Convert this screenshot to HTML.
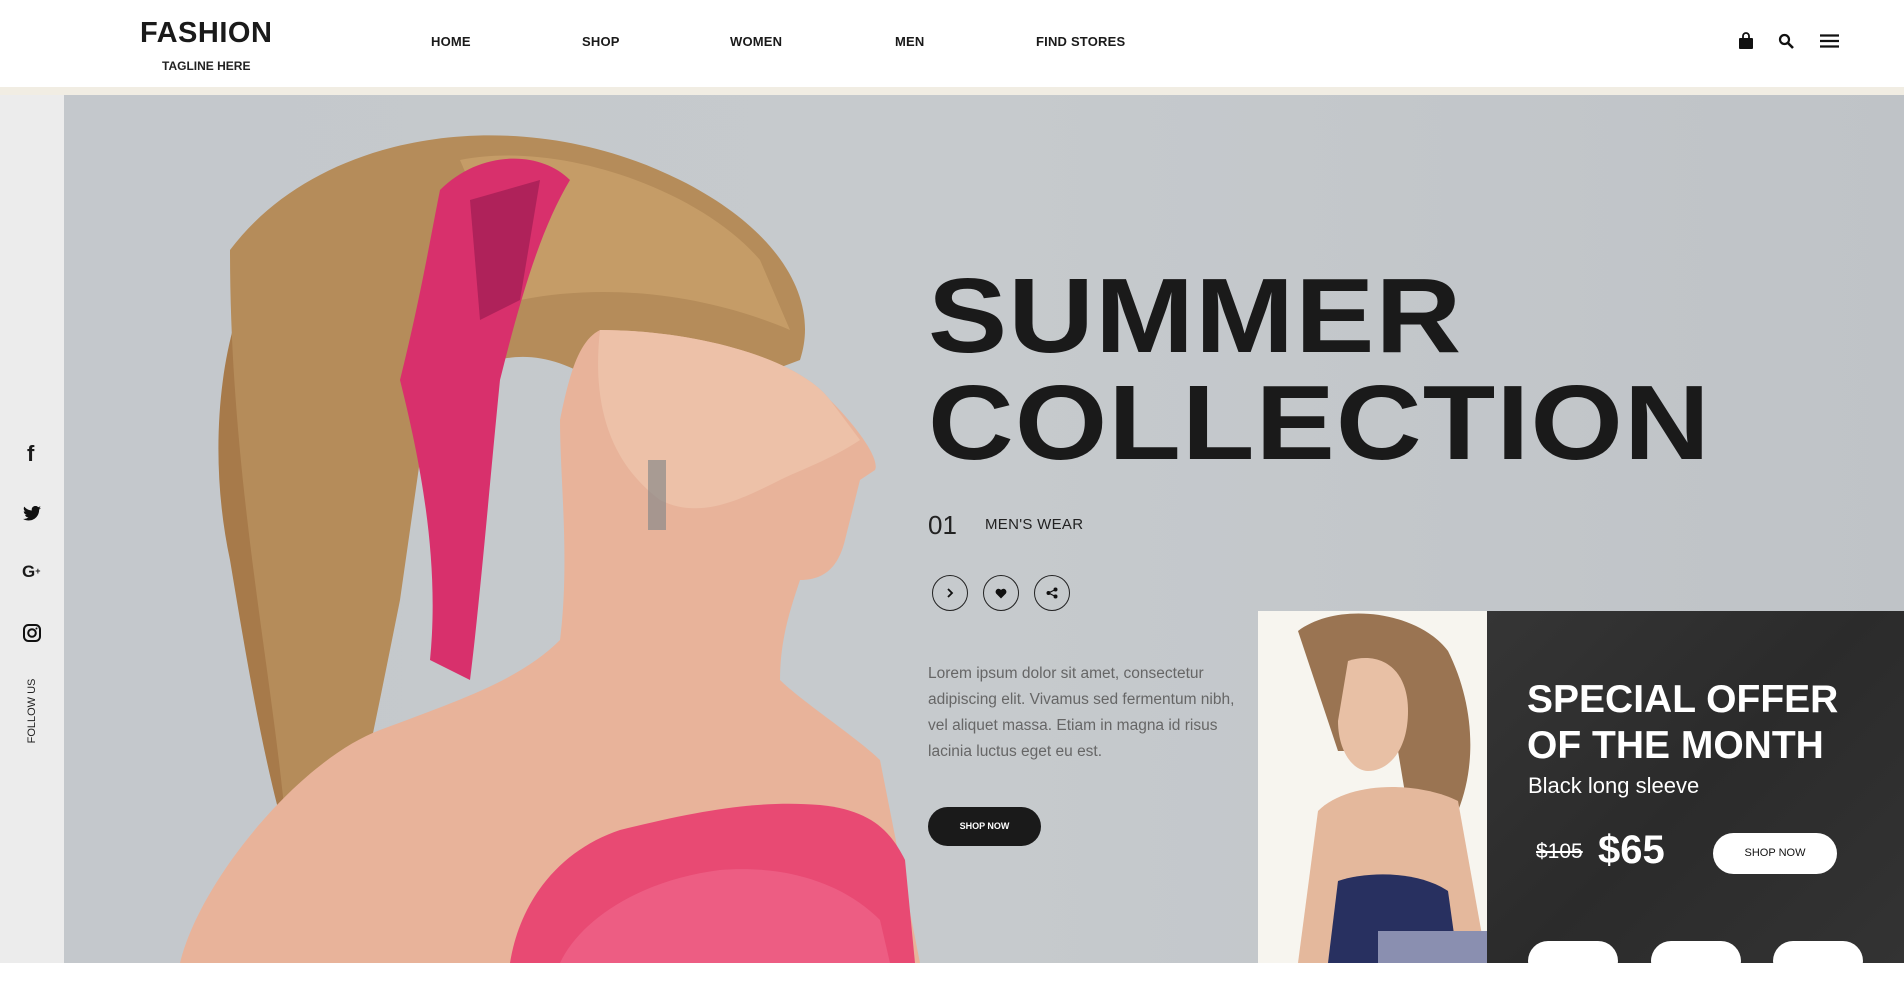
<!DOCTYPE html>
<html><head><meta charset="utf-8"><style>
*{margin:0;padding:0;box-sizing:border-box}
body{width:1904px;height:963px;overflow:hidden;font-family:"Liberation Sans",sans-serif;background:#fff;position:relative;color:#1a1a1a}
.abs{position:absolute}
header{position:absolute;left:0;top:0;width:1904px;height:87px;background:#fff}
.strip{position:absolute;left:0;top:87px;width:1904px;height:8px;background:#f1ede3}
.side{position:absolute;left:0;top:95px;width:64px;height:868px;background:#ececec}
.hero{position:absolute;left:64px;top:95px;width:1840px;height:868px;background:linear-gradient(90deg,#c4c8cc,#c6cacd 50%,#bfc3c7)}
.nav{position:absolute;top:34px;font-size:13px;font-weight:bold;letter-spacing:.2px}
.circ{position:absolute;width:36px;height:36px;border:1.5px solid #222;border-radius:50%;top:575px;display:flex;align-items:center;justify-content:center}
.wb{position:absolute;top:941px;width:90px;height:40px;background:#fff;border-radius:20px}
</style></head><body>
<header>
<div class="abs" style="left:140px;top:17px;font-size:29px;font-weight:bold;letter-spacing:.5px">FASHION</div>
<div class="abs" style="left:162px;top:59px;font-size:12px;font-weight:bold;color:#222">TAGLINE HERE</div>
<div class="nav" style="left:431px">HOME</div>
<div class="nav" style="left:582px">SHOP</div>
<div class="nav" style="left:730px">WOMEN</div>
<div class="nav" style="left:895px">MEN</div>
<div class="nav" style="left:1036px">FIND STORES</div>
<svg class="abs" style="left:1738px;top:32px" width="16" height="18" viewBox="0 0 16 18"><path d="M5 6V4a3 3 0 0 1 6 0v2" stroke="#111" stroke-width="1.8" fill="none"/><rect x="1" y="6" width="14" height="11" rx="1" fill="#111"/></svg>
<svg class="abs" style="left:1778px;top:33px" width="16" height="16" viewBox="0 0 16 16"><circle cx="6.5" cy="6.5" r="4.5" stroke="#111" stroke-width="2.2" fill="none"/><path d="M10 10l5 5" stroke="#111" stroke-width="2.6"/></svg>
<svg class="abs" style="left:1820px;top:34px" width="19" height="14" viewBox="0 0 19 14"><path d="M0 1.5h19M0 7h19M0 12.5h19" stroke="#111" stroke-width="2.2"/></svg>
</header>
<div class="strip"></div>
<div class="side">
<div class="abs" style="left:27px;top:346px;font-size:22px;font-weight:bold">f</div>
<svg class="abs" style="left:23px;top:411px" width="18" height="15" viewBox="0 0 24 20"><path d="M24 2.4a10 10 0 0 1-2.8.8A5 5 0 0 0 23.3.4a10 10 0 0 1-3.1 1.2A4.9 4.9 0 0 0 11.8 6 14 14 0 0 1 1.700.9a4.9 4.9 0 0 0 1.5 6.6A4.9 4.9 0 0 1 1 6.9a4.9 4.9 0 0 0 3.9 4.8 5 5 0 0 1-2.2.1 4.9 4.9 0 0 0 4.6 3.4A9.9 9.9 0 0 1 0 17.2 14 14 0 0 0 7.5 19.4c9.1 0 14-7.5 14-14v-.6A10 10 0 0 0 24 2.4z" fill="#111"/></svg>
<div class="abs" style="left:22px;top:467px;font-size:17px;font-weight:bold">G<span style="font-size:9px;vertical-align:3px">+</span></div>
<svg class="abs" style="left:23px;top:529px" width="18" height="18" viewBox="0 0 18 18"><rect x="1" y="1" width="16" height="16" rx="4.5" stroke="#111" stroke-width="2" fill="none"/><circle cx="9" cy="9" r="3.8" stroke="#111" stroke-width="2" fill="none"/><circle cx="13.5" cy="4.5" r="1" fill="#111"/></svg>
<div class="abs" style="left:-3px;top:610px;width:70px;font-size:11px;transform:rotate(-90deg);text-align:center;color:#222">FOLLOW US</div>
</div>
<div class="hero"></div>
<svg class="abs" style="left:64px;top:95px" width="1840" height="868" viewBox="64 95 1840 868">
<path d="M300 220 C230 260 200 420 230 560 C250 680 270 800 300 880 L360 880 C330 760 320 640 340 540 Z" fill="#a77a4a"/>
<path d="M230 250 C320 130 520 100 680 180 C780 230 820 300 800 360 L640 420 C560 330 450 330 420 460 L400 600 C380 700 360 800 340 880 L290 880 C280 700 230 500 230 250Z" fill="#b58c5a"/>
<path d="M460 160 C560 140 700 190 760 260 L790 330 C720 300 620 280 520 300Z" fill="#c9a06a" opacity=".8"/>
<path d="M440 190 C480 150 540 150 570 180 C540 230 520 300 500 380 C490 480 480 600 470 680 L430 660 C440 560 420 460 400 380 C420 300 430 240 440 190Z" fill="#d8306c"/>
<path d="M470 200 L540 180 L520 300 L480 320Z" fill="#9e1d52" opacity=".7"/>
<path d="M600 330 C700 330 800 360 830 400 C860 430 880 460 875 470 L860 480 C855 500 850 520 845 540 C840 560 830 580 800 580 C790 610 780 640 780 680 C800 700 860 740 880 760 L920 963 L180 963 C200 880 300 760 380 730 C460 700 520 680 560 640 C570 560 560 480 560 420 C570 370 580 340 600 330Z" fill="#e8b39a"/>
<path d="M600 330 C700 330 800 360 830 400 L860 440 C830 460 800 470 780 480 C740 500 700 520 660 500 C620 470 590 420 600 330Z" fill="#edc1a8"/>
<path d="M510 963 C520 900 560 850 620 830 C700 810 760 800 820 805 C870 810 890 830 905 860 L915 963Z" fill="#e84a73"/>
<path d="M560 963 C580 920 640 880 720 870 C780 865 840 880 880 920 L890 963Z" fill="#f0658a" opacity=".7"/>
<rect x="648" y="460" width="18" height="70" fill="#8a8a8a" opacity=".7"/>
</svg>
<div class="abs" style="left:928px;top:263px;font-size:106px;font-weight:bold;line-height:107px;color:#1a1a1a;letter-spacing:1px;transform:scaleX(1.12);transform-origin:left;white-space:nowrap">SUMMER<br>COLLECTION</div>
<div class="abs" style="left:928px;top:510px;font-size:26px;color:#222">01</div>
<div class="abs" style="left:985px;top:516px;font-size:15px;color:#222;letter-spacing:.3px">MEN'S WEAR</div>
<div class="circ" style="left:932px"><svg width="10" height="12" viewBox="0 0 10 12"><path d="M3 2l4 4-4 4" stroke="#111" stroke-width="1.8" fill="none"/></svg></div>
<div class="circ" style="left:983px"><svg width="12" height="11" viewBox="0 0 12 11"><path d="M6 10.5L1.2 5.6A2.7 2.7 0 0 1 6 2a2.7 2.7 0 0 1 4.8 3.6Z" fill="#111"/></svg></div>
<div class="circ" style="left:1034px"><svg width="12" height="12" viewBox="0 0 12 12"><circle cx="9.5" cy="2.5" r="2" fill="#111"/><circle cx="2.5" cy="6" r="2" fill="#111"/><circle cx="9.5" cy="9.5" r="2" fill="#111"/><path d="M9.5 2.5L2.5 6l7 3.5" stroke="#111" stroke-width="1.2" fill="none"/></svg></div>
<div class="abs" style="left:928px;top:661px;width:330px;font-size:15.5px;line-height:26px;color:#666">Lorem ipsum dolor sit amet, consectetur adipiscing elit. Vivamus sed fermentum nibh, vel aliquet massa. Etiam in magna id risus lacinia luctus eget eu est.</div>
<div class="abs" style="left:928px;top:807px;width:113px;height:39px;background:#1a1a1a;border-radius:20px;color:#fff;font-size:9px;font-weight:bold;text-align:center;line-height:39px">SHOP NOW</div>
<div class="abs" style="left:1258px;top:611px;width:229px;height:352px;background:#f7f5ef;overflow:hidden">
<svg width="229" height="352" viewBox="0 0 229 352"><path d="M40 20 C80 -10 160 0 190 40 C215 90 220 150 200 200 L150 200 L140 140 L80 140 Z" fill="#9a7452"/><path d="M90 50 C120 40 150 55 150 100 C150 140 130 160 110 160 C95 160 80 140 80 110Z" fill="#e8c0a5"/><path d="M60 200 C90 170 160 170 200 190 L229 352 L40 352Z" fill="#e4b89c"/><path d="M80 270 C110 260 160 260 190 280 L200 352 L70 352Z" fill="#283060"/><path d="M120 320 L229 320 L229 352 L120 352Z" fill="#8a8fb0"/></svg>
</div>
<div class="abs" style="left:1487px;top:611px;width:417px;height:352px;background:linear-gradient(135deg,#353535,#2b2b2b 50%,#333)"></div>
<div class="abs" style="left:1527px;top:677px;font-size:39px;font-weight:bold;line-height:46px;color:#fff">SPECIAL OFFER<br>OF THE MONTH</div>
<div class="abs" style="left:1528px;top:773px;font-size:22px;color:#fff">Black long sleeve</div>
<div class="abs" style="left:1536px;top:840px;font-size:21px;color:#fff;text-decoration:line-through">$105</div>
<div class="abs" style="left:1598px;top:828px;font-size:40px;font-weight:bold;color:#fff">$65</div>
<div class="abs" style="left:1713px;top:833px;width:124px;height:41px;background:#fff;border-radius:21px;color:#111;font-size:11px;text-align:center;line-height:41px">SHOP NOW</div>
<div class="wb" style="left:1528px"></div>
<div class="wb" style="left:1651px"></div>
<div class="wb" style="left:1773px"></div>
</body></html>
